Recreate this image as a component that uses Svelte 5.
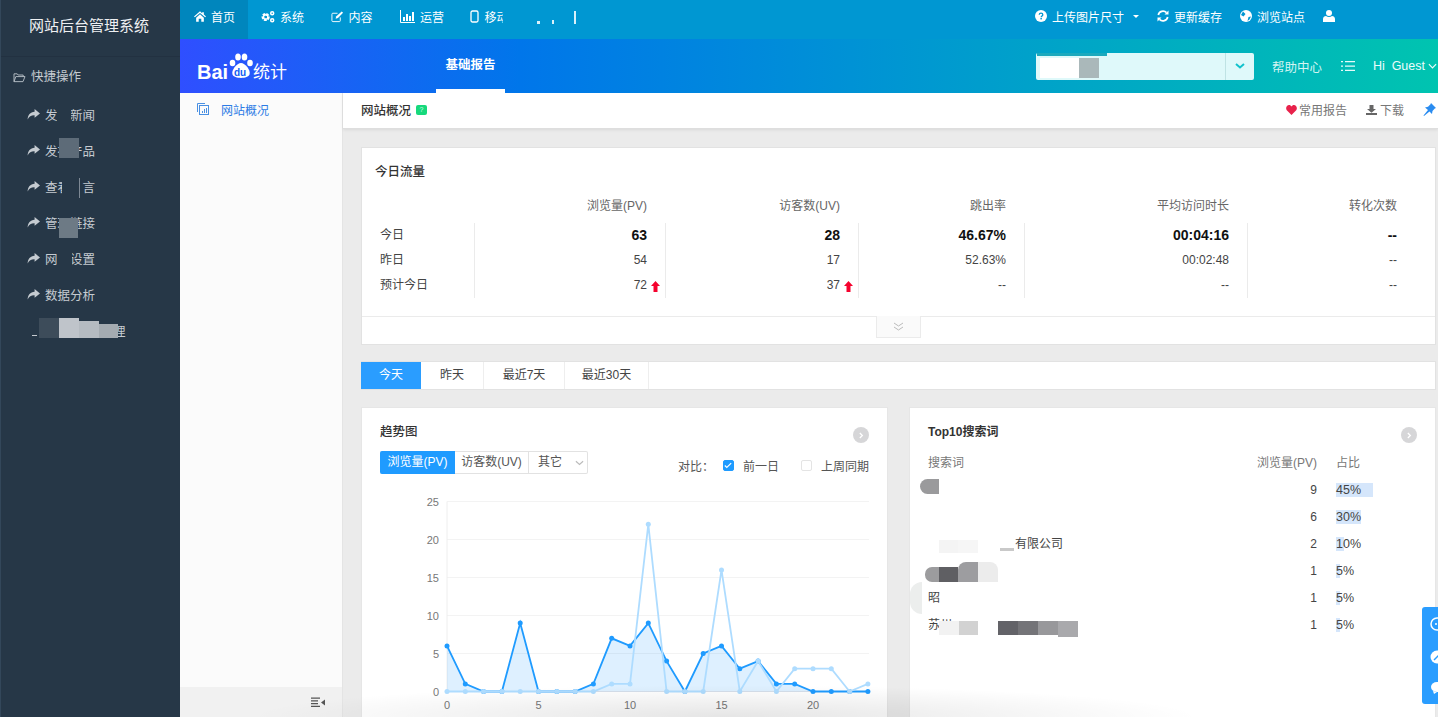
<script>
  const sideItems = ['发布新闻', '发布产品', '查看留言', '管理链接', '网站设置', '数据分析'];
  const heads = ['浏览量(PV)', '访客数(UV)', '跳出率', '平均访问时长', '转化次数'];
  const rows = [
    { label: '今日', bold: true, v: ['63', '28', '46.67%', '00:04:16', '--'] },
    { label: '昨日', v: ['54', '17', '52.63%', '00:02:48', '--'] },
    { label: '预计今日', up: true, v: ['72', '37', '--', '--', '--'] }
  ];
  const tabs = [['今天', 60], ['昨天', 63], ['最近7天', 81], ['最近30天', 84]];
  const pv = [6, 1, 0, 0, 9, 0, 0, 0, 1, 7, 6, 9, 4, 0, 5, 6, 3, 4, 1, 1, 0, 0, 0, 0];
  const last = [0, 0, 0, 0, 0, 0, 0, 0, 0, 1, 1, 22, 0, 0, 0, 16, 0, 4, 0, 3, 3, 3, 0, 1];
  const X = (i) => 85 + i * 18.3;
  const Y = (v) => 201.5 - v * 7.6;
  const line = (d) => d.map((v, i) => `${X(i)},${Y(v)}`).join(' ');
  const area = (d) => `${X(0)},${Y(0)} ${line(d)} ${X(23)},${Y(0)}`;
  const yticks = [0, 5, 10, 15, 20, 25];
  const xticks = [0, 5, 10, 15, 20];
  const words = [
    { n: 9, p: 45, t: '' },
    { n: 6, p: 30, t: '' },
    { n: 2, p: 10, t: '有限公司', o: 87 },
    { n: 1, p: 5, t: '司', o: 47 },
    { n: 1, p: 5, t: '昭', o: 0 },
    { n: 1, p: 5, t: '苏州', o: 0 }
  ];
  const dark = '#263747';
  const smudges = [
    [57, 105, 14, 20, dark], [59, 138, 20, 20, '#5d6b78'], [62, 177, 20, 20, dark], [79, 178, 1, 20, '#7d8894'],
    [59, 218, 19, 20, '#6d7a85'], [57, 249, 15, 20, dark],
    [39, 318, 20, 20, '#3d4c5a'], [59, 318, 20, 20, '#bfc4ca'], [79, 321, 20, 17, '#b5bbc1'], [99, 324, 19, 14, '#a4abb1'],
    [32, 335, 5, 1, '#c5cad0'],
    [1040, 58, 39, 20, '#ffffff'], [1079, 58, 20, 20, '#aab8ba'], [1037, 53, 70, 3, '#1ba9bd'],
    [920, 479, 19, 15, '#9a9a9c', '8px 0 0 8px'],
    [939, 540, 19, 13, '#f4f4f4'], [958, 540, 20, 13, '#f6f6f6'], [1000, 548, 14, 3, '#c9c9c9'],
    [925, 567, 14, 15, '#9c9c9e', '7px 0 0 7px'], [939, 567, 19, 15, '#5f5f63'], [958, 562, 20, 20, '#9d9da0', '8px 0 0 0'], [978, 562, 20, 20, '#ececec', '0 8px 0 0'],
    [910, 582, 12, 32, '#eceeed', '12px 0 0 12px'],
    [939, 621, 20, 14, '#f2f2f2'], [959, 621, 19, 14, '#d2d2d2'], [998, 621, 20, 14, '#636368'], [1018, 621, 20, 14, '#747478'],
    [1038, 621, 20, 14, '#98989b'], [1058, 621, 20, 16, '#a9a9ac'],
    [503, 8, 9, 20, '#0097d2'], [537, 21, 3, 3, '#d8f0fa'], [552, 20, 2, 4, '#d8f0fa'], [574, 11, 2, 13, '#d8f0fa']
  ];
</script>

<div class="page">
  <aside class="side">
    <div class="brand">网站后台管理系统</div>
    <div class="quick">
      <svg viewBox="0 0 14 12" width="13" height="11"><path d="M1 10.500V2h3.500l1 1.300H11v1.800M1 10.500 3 5h10l-2.200 5.500Z" fill="none" stroke="#b9c1c8" stroke-width="1"/></svg>
      快捷操作
    </div>
    <nav class="side-list">
      {#each sideItems as it}
        <div class="side-item">
          <svg viewBox="0 0 12 10" width="13" height="11"><path d="M7 0l5 4-5 4V5.600C4 5.500 2 6.400.6 9.600.6 5.500 3 2.700 7 2.400Z" fill="#c5cbd1"/></svg>
          <span class="st">{it}</span>
        </div>
      {/each}
      <div class="side-item last"><span class="st3">理</span></div>
    </nav>
  </aside>

  <div class="right">
    <header class="top">
      <a class="tn on">
        <svg viewBox="0 0 14 12" width="12" height="11"><path d="M7 0 0 6l1 1 6-5 6 5 1-1-2.500-2.200V1h-2v1.100ZM2.500 7.500V12h3V8.500h3V12h3V7.500L7 3.500Z" fill="#fff"/></svg>首页</a>
      <a class="tn">
        <svg viewBox="0 0 15 13" width="14" height="13"><g fill="none" stroke="#fff"><circle cx="5" cy="7" r="3" stroke-width="2.800" stroke-dasharray="2.600 1"/><circle cx="5" cy="7" r="2.400" stroke-width="1.400"/><circle cx="12" cy="3" r="1.600" stroke-width="1.600"/><circle cx="12" cy="10.500" r="1.600" stroke-width="1.600"/></g></svg>系统</a>
      <a class="tn">
        <svg viewBox="0 0 14 13" width="13" height="13"><path d="M10 7.500V11a1 1 0 0 1-1 1H2a1 1 0 0 1-1-1V4a1 1 0 0 1 1-1h5" fill="none" stroke="#fff"/><path d="M5 9l.5-2.500L11.500 1 13 2.500 7.500 8Z" fill="#fff"/></svg>内容</a>
      <a class="tn">
        <svg viewBox="0 0 15 13" width="15" height="13"><path d="M.5 0v12.500H15" fill="none" stroke="#fff"/><path d="M3 7h2v4H3zM6 4h2v7H6zM9 6h2v5H9zM12 2h2v9h-2z" fill="#fff"/></svg>运营</a>
      <a class="tn mob">
        <svg viewBox="0 0 9 13" width="9" height="13"><rect x="1" y="1" width="7" height="11" rx="1.500" fill="none" stroke="#fff" stroke-width="1.300"/></svg>移动</a>
      <div class="grow"></div>
      <a class="tr">
        <svg viewBox="0 0 12 12" width="12" height="12"><circle cx="6" cy="6" r="6" fill="#fff"/><path d="M4.200 4.700C4.300 3.700 5 3.200 6 3.200s1.800.6 1.800 1.500c0 1.200-1.600 1.300-1.600 2.500" fill="none" stroke="#0097d2" stroke-width="1.300"/><rect x="5.400" y="8" width="1.500" height="1.400" fill="#0097d2"/></svg>上传图片尺寸<i class="caret"></i></a>
      <a class="tr">
        <svg viewBox="0 0 12 12" width="12" height="12"><path d="M1.300 5A4.800 4.800 0 0 1 9.500 2.700M10.700 7A4.800 4.800 0 0 1 2.500 9.300" fill="none" stroke="#fff" stroke-width="1.700"/><path d="M11.500 .5v4h-4ZM.5 11.500v-4h4Z" fill="#fff"/></svg>更新缓存</a>
      <a class="tr">
        <svg viewBox="0 0 12 12" width="12" height="12"><circle cx="6" cy="6" r="6" fill="#fff"/><path d="M3 1.500 5.500 4 3.500 6.500 1 5ZM8.500 7l2.500-.5-1.500 3-2 1.500Z" fill="#0097d2"/></svg>浏览站点</a>
      <a class="tr user">
        <svg viewBox="0 0 12 12" width="12" height="12"><circle cx="6" cy="3" r="3" fill="#fff"/><path d="M0 12V9c0-2 1.500-3 3-3 1.800 1.400 4.200 1.400 6 0 1.500 0 3 1 3 3v3Z" fill="#fff"/></svg>
      </a>
    </header>

    <div class="bar">
      <div class="logo">
        <span class="bai">Bai</span>
        <svg class="paw" viewBox="0 0 24 28" width="24" height="28"><g fill="#fff"><ellipse cx="3.500" cy="11" rx="2.800" ry="3.300"/><ellipse cx="9" cy="5" rx="2.800" ry="3.500"/><ellipse cx="15.500" cy="5" rx="2.800" ry="3.500"/><ellipse cx="21" cy="11" rx="2.800" ry="3.300"/><path d="M12 11c4 0 10 7 8.500 11.500C19 27 5 27 3.500 22.500 2 18 8 11 12 11Z"/></g></svg>
        <span class="du">du</span>
        <span class="tj">统计</span>
      </div>
      <div class="rt-tab">基础报告</div>
      <div class="grow"></div>
      <div class="select">
        <div class="sv"></div>
        <div class="sb"><svg viewBox="0 0 10 6" width="10" height="6"><path d="M1 1l4 3.500L9 1" fill="none" stroke="#12c2cc" stroke-width="2"/></svg></div>
      </div>
      <span class="help">帮助中心</span>
      <svg class="list" viewBox="0 0 14 12" width="14" height="12"><path d="M0 1h2v1.300H0zM0 5.400h2v1.300H0zM0 9.700h2V11H0zM4 1h10v1.300H4zM4 5.400h10v1.300H4zM4 9.700h10V11H4z" fill="#e6fbfa"/></svg>
      <span class="hi">Hi&nbsp; Guest</span>
      <svg class="hic" viewBox="0 0 10 6" width="9" height="6"><path d="M1 1l4 4 4-4" fill="none" stroke="#eafcfb" stroke-width="1.300"/></svg>
    </div>

    <div class="body">
      <div class="leftnav">
        <div class="ln-item">
          <svg viewBox="0 0 12 12" width="12" height="12"><path d="M.5 9V.5H8" fill="none" stroke="#4a90e2"/><rect x="2.500" y="2.500" width="9" height="9" fill="none" stroke="#4a90e2"/><path d="M5 8h1v2H5zM7 6h1v4H7zM9 5h1v5H9z" fill="#4a90e2"/></svg>
          网站概况
        </div>
        <div class="grow"></div>
        <div class="ln-foot">
          <svg viewBox="0 0 14 11" width="14" height="11"><path d="M0 .5h9v1.300H0zM0 3.200h7v1.300H0zM0 6h7v1.300H0zM0 8.800h9v1.300H0zM14 2.500v6L10 5.500Z" fill="#555"/></svg>
        </div>
      </div>

      <main class="main">
        <div class="titlebar">
          <span class="tt">网站概况</span><span class="badge">?</span>
          <div class="grow"></div>
          <span class="act">
            <svg viewBox="0 0 12 11" width="11" height="10"><path d="M6 11 .8 5.700C-1 3.200 1 0 3.300 0 4.500 0 5.500.6 6 1.700 6.500.6 7.500 0 8.700 0 11 0 13 3.200 11.200 5.700Z" fill="#e8224b"/></svg>常用报告</span>
          <span class="act dl">
            <svg viewBox="0 0 11 10" width="11" height="10"><path d="M3.500 0h4v4H10L5.500 7.800 1 4h2.500ZM0 8h11v2H0z" fill="#666"/></svg>下载</span>
          <svg class="pin" viewBox="0 0 13 13" width="13" height="13"><path d="M8 0l5 5-1.200.5L9.500 8 9 11 6.500 8.500 1 13l-.5-.5L5 7 2 4.500l3-.7L7.500 1.200Z" fill="#2a8cf0"/></svg>
        </div>

        <div class="content">
          <section class="card today">
            <h3 class="ct">今日流量</h3>
            <div class="tbl">
              <div class="hrow">
                <div class="lb"></div>
                {#each heads as h, i}<div class="hc c{i}">{h}</div>{/each}
              </div>
              <div class="rows">
                <div class="col lab">
                  {#each rows as r}<div class="cell">{r.label}</div>{/each}
                </div>
                {#each heads as _, i}
                  <div class="col vals c{i}">
                    {#each rows as r}
                      <div class="cell" class:bold={r.bold}>
                        {r.v[i]}
                        {#if r.up && i < 2}
                          <svg class="up" viewBox="0 0 9 11" width="9" height="11"><path d="M4.500 0 9 5H6.500v6h-4V5H0Z" fill="#f5022e"/></svg>
                        {/if}
                      </div>
                    {/each}
                  </div>
                {/each}
              </div>
            </div>
            <div class="expander">
              <div class="exbtn">
                <svg viewBox="0 0 11 9" width="11" height="9"><path d="M1 1l4.500 3L10 1M1 5l4.500 3L10 5" fill="none" stroke="#bbb"/></svg>
              </div>
            </div>
          </section>

          <div class="tabs">
            {#each tabs as t, i}
              <div class="tab" class:active={i === 0} style="width:{t[1]}px">{t[0]}</div>
            {/each}
          </div>

          <div class="cards">
            <section class="card trend">
              <div class="cap"><h3 class="ct2">趋势图</h3><span class="go"><svg viewBox="0 0 6 8" width="5" height="7"><path d="M1 1l3 3-3 3" fill="none" stroke="#fff" stroke-width="1.600"/></svg></span></div>
              <div class="ctrl">
                <div class="seg">
                  <span class="s on">浏览量(PV)</span>
                  <span class="s">访客数(UV)</span>
                  <span class="s more">其它<svg viewBox="0 0 10 6" width="9" height="6"><path d="M1 1l4 3.500L9 1" fill="none" stroke="#bbb" stroke-width="1.300"/></svg></span>
                </div>
                <div class="grow"></div>
                <div class="cmp">
                  <span>对比：</span>
                  <span class="chk on"><svg viewBox="0 0 10 8" width="8" height="7"><path d="M1 4l2.500 2.500L9 1" fill="none" stroke="#fff" stroke-width="1.500"/></svg></span>
                  <span class="cl">前一日</span>
                  <span class="chk"></span>
                  <span class="cl">上周同期</span>
                </div>
              </div>
              <svg class="chart" viewBox="0 0 527 227" width="527" height="227">
                {#each yticks as t}
                  <line x1="85" x2="507" y1={Y(t)} y2={Y(t)} stroke={t === 0 ? '#e4e6ea' : '#f3f3f3'} />
                  <text x="77" y={Y(t) + 4} text-anchor="end" class="tick">{t}</text>
                {/each}
                <line x1="85" x2="85" y1={Y(25)} y2={Y(0)} stroke="#eee" />
                {#each xticks as t}
                  <text x={X(t)} y="219" text-anchor="middle" class="tick">{t}</text>
                {/each}
                <polygon points={area(pv)} fill="#1f9bff" fill-opacity=".15" />
                <polyline points={line(pv)} fill="none" stroke="#1f9bff" stroke-width="1.800" />
                {#each pv as v, i}<circle cx={X(i)} cy={Y(v)} r="2.500" fill="#1f9bff" />{/each}
                <polyline points={line(last)} fill="none" stroke="#aedcff" stroke-width="1.800" />
                {#each last as v, i}<circle cx={X(i)} cy={Y(v)} r="2.500" fill="#aedcff" />{/each}
              </svg>
            </section>

            <section class="card top10">
              <div class="cap"><h3 class="ct2 lat">Top10搜索词</h3><span class="go"><svg viewBox="0 0 6 8" width="5" height="7"><path d="M1 1l3 3-3 3" fill="none" stroke="#fff" stroke-width="1.600"/></svg></span></div>
              <div class="wrow whead"><span class="w">搜索词</span><span class="n">浏览量(PV)</span><span class="p">占比</span></div>
              {#each words as r}
                <div class="wrow">
                  <span class="w"><span class="wt" style="margin-left:{r.o || 0}px">{r.t}</span></span>
                  <span class="n">{r.n}</span>
                  <span class="p"><i class="pb" style="width:{r.p * 0.82}px"></i><b>{r.p}%</b></span>
                </div>
              {/each}
            </section>
          </div>
        </div>
      </main>
    </div>
  </div>

  {#each smudges as s}
    <i class="sm" style="left:{s[0]}px;top:{s[1]}px;width:{s[2]}px;height:{s[3]}px;background:{s[4]};border-radius:{s[5] || 0}"></i>
  {/each}
  <i class="fade"></i>

  <div class="float">
    <svg viewBox="0 0 16 97" width="16" height="97"><g fill="none" stroke="#fff" stroke-width="1.500"><circle cx="15" cy="17" r="6"/></g><circle cx="14" cy="17" r="1" fill="#fff"/><circle cx="15" cy="50" r="6.500" fill="#fff"/><path d="M12 53l5-5" stroke="#2a9dff" stroke-width="1.500"/><ellipse cx="15" cy="80" rx="6" ry="5" fill="#fff"/><path d="M11 84l1 3 3-2Z" fill="#fff"/></svg>
  </div>
</div>

<style>
  :global(body) {
    margin: 0;
    overflow: hidden;
    background: #ebebeb;
  }
  .page {
    position: relative;
    width: 1438px;
    height: 717px;
    overflow: hidden;
    display: flex;
    font-family: "Liberation Sans", "Noto Sans CJK SC", sans-serif;
    font-size: 12px;
    color: #444;
  }
  .grow { flex: 1; }
  .side {
    width: 180px;
    flex: none;
    background: #263747;
    border-left: 1px solid #33475a;
    box-sizing: border-box;
    color: #c5cbd1;
  }
  .brand {
    height: 57px;
    box-sizing: border-box;
    padding-top: 15px;
    padding-left: 28px;
    font-size: 15px;
    line-height: 21px;
    color: #eef0f2;
    border-bottom: 1px solid #223141;
  }
  .quick {
    display: flex;
    align-items: center;
    gap: 5px;
    padding: 11px 0 0 12px;
    height: 18px;
    font-size: 12.500px;
    line-height: 18px;
  }
  .side-list { padding-top: 10px; }
  .side-item {
    height: 36px;
    display: flex;
    align-items: center;
    padding-left: 26px;
    font-size: 12.500px;
  }
  .side-item svg { margin-right: 5px; }
  .side-item.last .st3 { margin-left: 86px; }
  .right {
    flex: 1;
    min-width: 0;
    display: flex;
    flex-direction: column;
  }
  .top {
    height: 39px;
    flex: none;
    display: flex;
    align-items: center;
    background: #0097d2;
    color: #fff;
    padding-bottom: 7px;
    box-sizing: border-box;
  }
  .tn {
    height: 39px;
    margin-bottom: -7px;
    padding: 0 0 7px 13px;
    box-sizing: border-box;
    display: flex;
    align-items: center;
    gap: 5px;
    width: 69.500px;
    flex: none;
    white-space: nowrap;
  }
  .tn svg { flex: none; }
  .tn.on { background: #0086bd; width: 68px; padding-left: 14px; }
  .tn.mob { gap: 6px; }
  .tr {
    display: flex;
    align-items: center;
    gap: 5px;
    margin-right: 18px;
  }
  .tr.user { margin-right: 103px; }
  .caret {
    width: 0;
    height: 0;
    margin-left: 4px;
    border: 3px solid transparent;
    border-top: 3px solid #fff;
    border-bottom: 0;
  }
  .bar {
    height: 54px;
    flex: none;
    display: flex;
    align-items: center;
    background: linear-gradient(90deg, #2f4fff 0, #0076ea 27%, #00c4b0 100%);
    color: #fff;
    position: relative;
  }
  .logo {
    position: relative;
    width: 256px;
    height: 54px;
    flex: none;
  }
  .bai {
    position: absolute;
    left: 17px;
    top: 21px;
    font: bold 20px/24px "Liberation Sans", sans-serif;
  }
  .paw { position: absolute; left: 49px; top: 13px; }
  .du {
    position: absolute;
    left: 54px;
    top: 28px;
    width: 14px;
    font: bold 10px/12px "Liberation Sans", sans-serif;
    color: #0f5df4;
  }
  .tj {
    position: absolute;
    left: 73px;
    top: 22px;
    font-size: 17px;
    line-height: 24px;
  }
  .rt-tab {
    position: relative;
    width: 69px;
    height: 54px;
    line-height: 52px;
    text-align: center;
    font-size: 12.500px;
    font-weight: bold;
  }
  .rt-tab::after {
    content: "";
    position: absolute;
    left: 0;
    right: 0;
    bottom: 0;
    height: 4px;
    background: #fff;
  }
  .select {
    width: 218px;
    height: 27px;
    display: flex;
    background: #dff9fa;
    border-radius: 2px;
  }
  .sv { flex: 1; }
  .sb {
    width: 28px;
    border-left: 1px solid #bfe3e4;
    display: flex;
    align-items: center;
    justify-content: center;
  }
  .help { margin-left: 18px; font-size: 12.500px; color: #d4f5f2; }
  .list { margin-left: 19px; }
  .hi { margin-left: 18px; font-size: 12.500px; color: #eafcfb; }
  .hic { margin-left: 3px; margin-right: 1px; flex: none; }
  .body {
    flex: 1;
    min-height: 0;
    display: flex;
  }
  .leftnav {
    width: 163px;
    flex: none;
    display: flex;
    flex-direction: column;
    background: #fbfbfb;
    border-right: 1px solid #e4e4e4;
    box-sizing: border-box;
  }
  .ln-item {
    display: flex;
    align-items: center;
    gap: 12px;
    height: 32px;
    padding-left: 17px;
    color: #2d7be5;
  }
  .ln-foot {
    height: 30px;
    background: #f1f1f1;
    display: flex;
    align-items: center;
    justify-content: flex-end;
    padding-right: 17px;
  }
  .main {
    flex: 1;
    min-width: 0;
    display: flex;
    flex-direction: column;
  }
  .titlebar {
    height: 36px;
    flex: none;
    display: flex;
    align-items: center;
    box-sizing: border-box;
    padding: 0 2px 2px 18px;
    background: #fff;
    border-bottom: 1px solid #dedede;
    box-shadow: 0 1px 3px rgba(0, 0, 0, .08);
  }
  .tt { font-size: 12.500px; color: #333; font-weight: 500; }
  .badge {
    margin-left: 5px;
    width: 11px;
    height: 10px;
    border-radius: 2px;
    background: #16d97c;
    color: #d5ffe9;
    font-size: 7px;
    line-height: 10px;
    text-align: center;
  }
  .act {
    display: flex;
    align-items: center;
    gap: 2px;
    color: #777;
    margin-right: 19px;
  }
  .act.dl { gap: 3px; }
  .pin { flex: none; }
  .content {
    flex: 1;
    padding: 18px 2px 0 18px;
    min-height: 0;
  }
  .card {
    background: #fff;
    border: 1px solid #e2e2e2;
    box-sizing: border-box;
  }
  .today { height: 198px; display: flex; flex-direction: column; }
  .ct {
    margin: 0;
    padding: 16px 0 0 13px;
    font-size: 12.500px;
    line-height: 16px;
    font-weight: 500;
    color: #333;
    height: 32px;
    box-sizing: border-box;
  }
  .tbl { flex: 1; }
  .hrow, .rows {
    display: grid;
    grid-template-columns: 112px 191px 193px 166px 223px 188px;
  }
  .hrow { padding-top: 18px; height: 25px; line-height: 16px; color: #666; }
  .hc { text-align: right; padding-right: 18px; }
  .hc.c4 { padding-right: 38px; }
  .lab { padding-left: 18px; }
  .vals { border-left: 1px solid #ebebeb; text-align: right; padding-right: 18px; }
  .vals.c4 { padding-right: 38px; }
  .cell {
    height: 25px;
    line-height: 25px;
    color: #444;
    position: relative;
    white-space: nowrap;
  }
  .cell.bold { font-size: 14px; font-weight: bold; color: #111; }
  .up { position: absolute; right: -13px; top: 8px; }
  .expander {
    height: 28px;
    border-top: 1px solid #ebebeb;
    position: relative;
    box-sizing: border-box;
  }
  .exbtn {
    position: absolute;
    left: 514px;
    top: -1px;
    width: 45px;
    height: 22px;
    box-sizing: border-box;
    background: #fafafa;
    border: 1px solid #ebebeb;
    border-top: 0;
    display: flex;
    align-items: center;
    justify-content: center;
  }
  .tabs {
    margin-top: 16px;
    height: 29px;
    display: flex;
    background: #fff;
    border-top: 1px solid #e2e2e2;
    border-bottom: 1px solid #e2e2e2;
    border-right: 1px solid #e2e2e2;
    box-sizing: border-box;
  }
  .tab {
    line-height: 27px;
    text-align: center;
    border-right: 1px solid #eee;
    box-sizing: border-box;
    color: #444;
  }
  .tab.active { background: #2a9dff; color: #fff; border-right: 0; }
  .cards {
    margin-top: 17px;
    display: grid;
    grid-template-columns: 527px 527px;
    column-gap: 21px;
  }
  .trend, .top10 { height: 330px; border-color: #e6e6e6; padding: 0 18px; }
  .cap {
    display: flex;
    justify-content: space-between;
    padding-top: 16px;
    height: 43px;
    box-sizing: border-box;
  }
  .ct2 {
    margin: 0;
    font-size: 12.500px;
    line-height: 16px;
    font-weight: 500;
    color: #333;
  }
  .ct2.lat { font-weight: bold; font-size: 12px; }
  .go {
    width: 16px;
    height: 16px;
    margin-top: 3px;
    border-radius: 50%;
    background: #d6d6d8;
    display: flex;
    align-items: center;
    justify-content: center;
  }
  .ctrl { display: flex; align-items: flex-start; height: 39px; }
  .seg {
    display: flex;
    height: 23px;
    border: 1px solid #e2e2e2;
    border-left: 0;
    box-sizing: border-box;
    border-radius: 2px;
    width: 208px;
    line-height: 21px;
  }
  .s {
    width: 74px;
    text-align: center;
    border-right: 1px solid #e2e2e2;
    box-sizing: border-box;
    color: #555;
    white-space: nowrap;
  }
  .s.on {
    background: #1f9bff;
    color: #fff;
    margin: -1px 0;
    height: 23px;
    line-height: 23px;
    width: 75px;
    border-right: 0;
    border-radius: 2px 0 0 2px;
  }
  .s.more {
    width: 58px;
    border-right: 0;
    display: flex;
    align-items: center;
    padding-left: 9px;
    gap: 13px;
  }
  .cmp {
    display: flex;
    align-items: center;
    height: 16px;
    margin-top: 6px;
    color: #555;
  }
  .chk {
    width: 11px;
    height: 11px;
    margin-left: 14px;
    margin-right: 9px;
    border: 1px solid #e4e4e4;
    border-radius: 2px;
    box-sizing: border-box;
    display: flex;
    align-items: center;
    justify-content: center;
  }
  .cmp .cl + .chk { margin-left: 22px; }
  .chk.on { background: #1f9bff; border-color: #1f9bff; margin-left: 9px; }
  .chart { display: block; margin-left: -18px; overflow: visible; }
  .tick {
    font-size: 11px;
    fill: #777;
    font-family: "Liberation Sans", sans-serif;
  }
  .wrow {
    display: grid;
    grid-template-columns: 1fr 60px 118px;
    height: 27px;
    line-height: 27px;
    margin-right: -18px;
    color: #444;
  }
  .wrow.whead { color: #777; height: 26px; line-height: 24px; }
  .n { text-align: right; white-space: nowrap; }
  .p { position: relative; padding-left: 17px; display: block; }
  .pb {
    position: absolute;
    left: 19px;
    top: 6px;
    height: 14px;
    background: #d5e6fb;
  }
  .p b { position: relative; font-weight: normal; padding-left: 2px; font-size: 12.500px; }
  .whead .p { padding-left: 19px; }
  .wt { white-space: nowrap; }
  .sm { position: absolute; display: block; }
  .fade {
    position: absolute;
    left: 250px;
    width: 950px;
    bottom: 0;
    height: 32px;
    display: block;
    background: radial-gradient(ellipse 50% 100% at 50% 100%, rgba(0, 0, 0, .1), rgba(0, 0, 0, 0));
    pointer-events: none;
  }
  .float {
    position: absolute;
    right: 0;
    top: 607px;
    width: 16px;
    height: 97px;
    background: #2a9dff;
    border-radius: 3px 0 0 3px;
  }
  .float svg { display: block; }
</style>
